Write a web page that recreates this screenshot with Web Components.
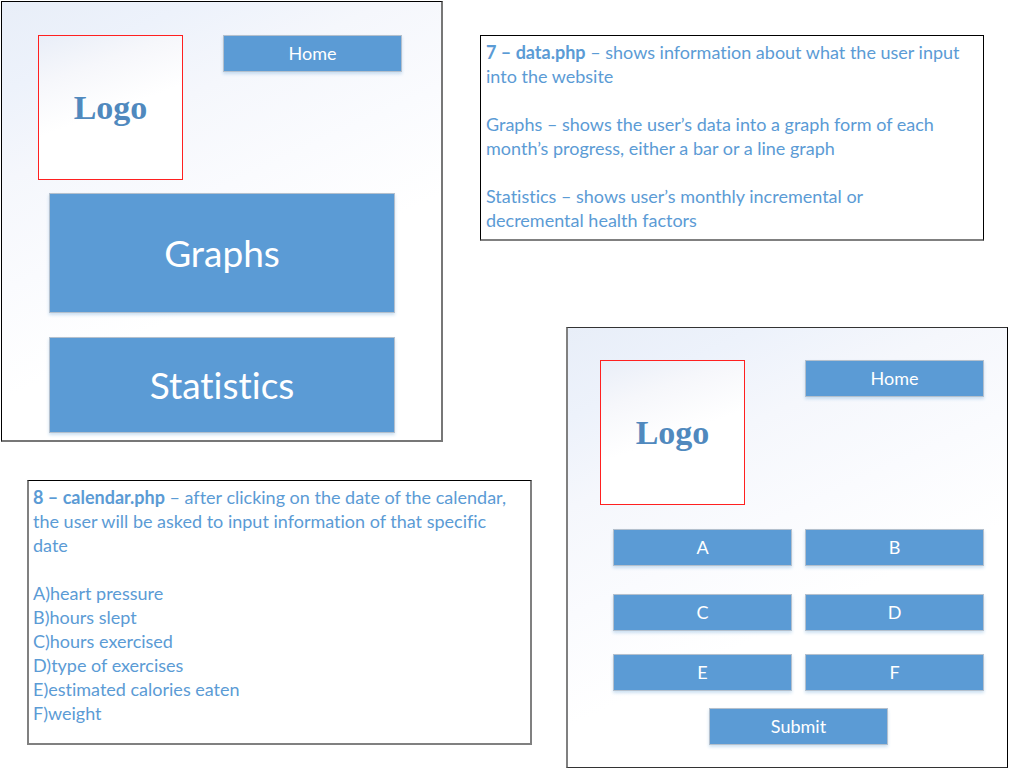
<!DOCTYPE html>
<html lang="en">
<head>
<meta charset="utf-8">
<title>Page wireframes</title>
<style>
  body { margin: 0; background: #fff; font-family: Lato, "Open Sans", sans-serif; font-variant-ligatures: none; }
</style>
</head>
<body>
<wire-board></wire-board>

<template id="board">
  <style>
    :host { display: block; padding: 1px 1px 0; }
    /* The frames and notes are staggered, so they span shared tracks. */
    main {
      display: grid;
      grid-template-columns: 26fr 416fr 37fr 52fr 34fr 418fr 24fr;
      grid-template-rows: minmax(34px, auto) minmax(206px, auto) minmax(86px, auto) minmax(115px, auto) minmax(38px, auto) minmax(265px, auto) minmax(23px, auto);
    }
    .data { grid-area: 1 / 1 / 5 / 3; border-width: 1px 2px 2px 1px; border-color: #000 #777 #777 #000; }
    .data-note { grid-area: 2 / 4 / 3 / 7; border-bottom: 2px solid #808080; }
    .calendar-note { grid-area: 6 / 2 / 7 / 5; border-width: 1px 2px 2px; border-color: #000 #808080 #808080; padding-left: 4px; }
    .calendar { grid-area: 4 / 6 / 8 / 8; border-width: 1px 1px 1px 2px; border-color: #333 #000 #333 #808080; }
    .stack { display: grid; gap: 24px; padding: 13px 7px 0 11px; }
    .tall { --height: 120px; --size: 37px; }
    .medium { --height: 96px; --size: 37px; }
    .fields {
      display: grid;
      grid-template-columns: 1fr 1fr;
      grid-template-rows: 65px 60px 54px auto;
      column-gap: 13px;
      align-items: start;
      padding: 24px 0 0 13px;
    }
    .submit { grid-column: 1 / 3; justify-self: center; width: 179px; }
    p, ul { margin: 0 0 24px; padding: 0; list-style: none; }
    p:last-child, ul:last-child { margin-bottom: 0; }
  </style>
  <main>
    <wire-frame class="data">
      <wire-button slot="action">Home</wire-button>
      <div class="stack">
        <wire-button class="tall">Graphs</wire-button>
        <wire-button class="medium">Statistics</wire-button>
      </div>
    </wire-frame>
    <wire-note class="data-note">
      <p><b>7 – data.php</b> – shows information about what the user input<br>into the website</p>
      <p>Graphs – shows the user’s data into a graph form of each<br>month’s progress, either a bar or a line graph</p>
      <p>Statistics – shows user’s monthly incremental or<br>decremental health factors</p>
    </wire-note>
    <wire-note class="calendar-note">
      <p><b>8 – calendar.php</b> – after clicking on the date of the calendar,<br>the user will be asked to input information of that specific<br>date</p>
      <ul>
        <li>A)heart pressure</li>
        <li>B)hours slept</li>
        <li>C)hours exercised</li>
        <li>D)type of exercises</li>
        <li>E)estimated calories eaten</li>
        <li>F)weight</li>
      </ul>
    </wire-note>
    <wire-frame class="calendar">
      <wire-button slot="action">Home</wire-button>
      <div class="fields">
        <wire-button>A</wire-button>
        <wire-button>B</wire-button>
        <wire-button>C</wire-button>
        <wire-button>D</wire-button>
        <wire-button>E</wire-button>
        <wire-button>F</wire-button>
        <wire-button class="submit">Submit</wire-button>
      </div>
    </wire-frame>
  </main>
</template>

<template id="frame">
  <style>
    :host {
      display: block;
      box-sizing: border-box;
      border: 1px solid #000;
      padding: 33px 39px 0 36px;
      background: linear-gradient(155deg, #e8eef8 0%, #edf2fb 14%, #f5f7fc 28%, #fafbfe 45%, #fff 62%);
    }
    :host(.calendar) { padding: 32px 23px 0 32px; }
    header { display: flex; justify-content: space-between; align-items: flex-start; }
    ::slotted([slot="action"]) { width: 179px; }
  </style>
  <header><wire-logo></wire-logo><slot name="action"></slot></header>
  <slot></slot>
</template>

<template id="logo">
  <style>
    :host {
      display: flex;
      align-items: center;
      justify-content: center;
      box-sizing: border-box;
      width: 145px;
      height: 145px;
      border: 1px solid #ff2020;
      background: linear-gradient(160deg, #e9eef8 0%, #f6f7fb 25%, #fff 52%);
      color: #5089be;
      font: bold 34px/40px "Liberation Serif", serif;
    }
  </style>
  <span>Logo</span>
</template>

<template id="button">
  <style>
    :host { display: block; }
    button {
      display: block;
      box-sizing: border-box;
      width: 100%;
      height: var(--height, 37px);
      margin: 0;
      padding: 0 0 2px;
      border: 1px solid #b4c0cd;
      background: #5b9bd5;
      box-shadow: 0 2px 3px #5b9bd54d;
      color: #fff;
      font-family: inherit;
      font-variant-ligatures: inherit;
      font-size: var(--size, 18px);
      line-height: 1;
    }
  </style>
  <button type="button"><slot></slot></button>
</template>

<template id="note">
  <style>
    :host {
      display: block;
      box-sizing: border-box;
      border: 1px solid #000;
      padding: 4px 4px 0 5px;
      color: #5b9bd5;
      font-size: 18px;
      line-height: 24px;
    }
  </style>
  <slot></slot>
</template>

<script>
  const define = (name, id) => customElements.define(name, class extends HTMLElement {
    constructor() {
      super();
      this.attachShadow({ mode: "open" })
        .append(document.getElementById(id).content.cloneNode(true));
    }
  });
  define("wire-button", "button");
  define("wire-logo", "logo");
  define("wire-note", "note");
  define("wire-frame", "frame");
  define("wire-board", "board");
</script>
</body>
</html>
